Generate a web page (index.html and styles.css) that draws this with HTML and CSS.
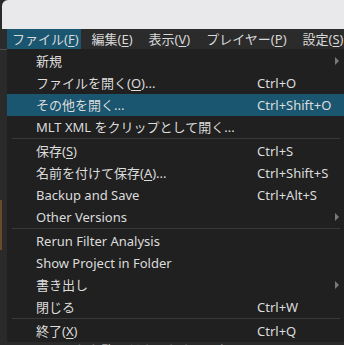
FILE: index.html
```html
<!DOCTYPE html>
<html lang="ja">
  <head>
    <meta charset="UTF-8" />
    <meta name="viewport" content="width=device-width, initial-scale=1.0" />
    <link rel="stylesheet" href="styles.css">
  </head>
  <body>
    <div class="window">
      <div class="titlebar"></div>

      <nav class="menubar">
        <span class="menubar-item active">ファイル(<u>F</u>)</span>
        <span class="menubar-item">編集(<u>E</u>)</span>
        <span class="menubar-item">表示(<u>V</u>)</span>
        <span class="menubar-item">プレイヤー(<u>P</u>)</span>
        <span class="menubar-item">設定(<u>S</u>)</span>
      </nav>

      <div class="workspace">
        <div class="edge-mark"></div>
        <p class="behind-text">にまあれを覧くださいたさせまり&nbsp;&nbsp;&nbsp;&nbsp;00:00:31:07</p>

        <!-- ファイルメニュー -->
        <ul class="menu">
          <li class="menu-item"><span class="label">新規</span><span class="arrow"></span></li>
          <li class="menu-item"><span class="label">ファイルを開く(<u>O</u>)...</span><span class="shortcut">Ctrl+O</span></li>
          <li class="menu-item selected"><span class="label">その他を開く...</span><span class="shortcut">Ctrl+Shift+O</span></li>
          <li class="menu-item"><span class="label">MLT XML をクリップとして開く...</span></li>
          <li class="separator"></li>
          <li class="menu-item"><span class="label">保存(<u>S</u>)</span><span class="shortcut">Ctrl+S</span></li>
          <li class="menu-item"><span class="label">名前を付けて保存(<u>A</u>)...</span><span class="shortcut">Ctrl+Shift+S</span></li>
          <li class="menu-item"><span class="label">Backup and Save</span><span class="shortcut">Ctrl+Alt+S</span></li>
          <li class="menu-item"><span class="label">Other Versions</span><span class="arrow"></span></li>
          <li class="separator"></li>
          <li class="menu-item"><span class="label">Rerun Filter Analysis</span></li>
          <li class="menu-item"><span class="label">Show Project in Folder</span></li>
          <li class="menu-item"><span class="label">書き出し</span><span class="arrow"></span></li>
          <li class="menu-item"><span class="label">閉じる</span><span class="shortcut">Ctrl+W</span></li>
          <li class="separator"></li>
          <li class="menu-item"><span class="label">終了(<u>X</u>)</span><span class="shortcut">Ctrl+Q</span></li>
        </ul>
      </div>
    </div>
  </body>
</html>
```

FILE: styles.css
```css
/* ページ全体 */
html,
body {
  margin: 0;
  padding: 0;
  background-color: #2a2a2a;
  overflow: hidden;
}

body {
  font-family: "Noto Sans", "Noto Sans CJK JP", sans-serif;
  font-size: 13px;
  color: #dcdcdc;
}

.window {
  width: 344px;
  height: 345px;
  display: flex;
  flex-direction: column;
}

/* 上の明るい部分 */
.titlebar {
  height: 29px;
  margin-left: 2px;
  background-color: #e9e9eb;
  border-top-left-radius: 6px;
}

/* メニューバー */
.menubar {
  height: 20px;
  display: flex;
  align-items: stretch;
  gap: 6px;
  padding-left: 7px;
  background-color: #2b2b2b;
  white-space: nowrap;
}

.menubar-item {
  padding: 0 5px;
  line-height: 20px;
  color: #d8d8d8;
}

.menubar-item.active {
  padding-right: 2px;
  background-color: #1a5670;
}

u {
  text-underline-offset: 2px;
}

/* メニューの下の作業エリア */
.workspace {
  flex: 1;
  position: relative;
  background-color: #2a2a2a;
  border-top: 1px solid #4e4e4e;
}

.edge-mark {
  width: 2px;
  height: 50px;
  margin-top: 150px;
  background-color: #6a4a2a;
}

.behind-text {
  position: absolute;
  left: 36px;
  top: 290px;
  margin: 0;
  white-space: nowrap;
  color: #cfcfcf;
}

/* ドロップダウンメニュー */
.menu {
  position: absolute;
  left: 7px;
  top: -1px;
  width: 337px;
  margin: 0;
  padding: 1px 0 0;
  list-style: none;
  background-color: #202020;
}

.menu-item {
  height: 22px;
  line-height: 22px;
  display: flex;
  align-items: center;
  padding-left: 29px;
  white-space: nowrap;
  position: relative;
}

.menu-item.selected {
  background-color: #1a5670;
}

.label {
  width: 221px;
}

.shortcut {
  color: #dcdcdc;
}

.arrow {
  position: absolute;
  right: 5px;
  top: 7px;
  width: 0;
  height: 0;
  border-top: 4px solid transparent;
  border-bottom: 4px solid transparent;
  border-left: 4px solid #7a7a7a;
}

.separator {
  height: 0;
  margin: 0 4px 1px 5px;
  border-top: 1px solid #383838;
}
```
